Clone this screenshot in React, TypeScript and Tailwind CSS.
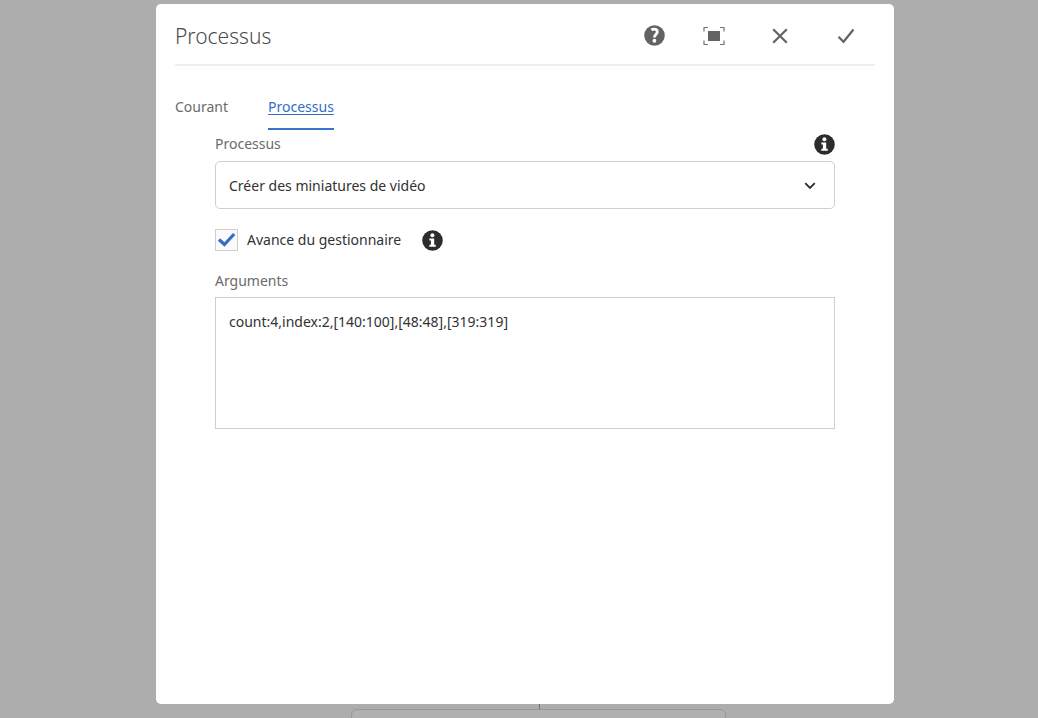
import { useState } from "react";

function InfoIcon() {
  return (
    <svg viewBox="0 0 20 20" className="size-[21px]" aria-hidden="true">
      <circle cx="10" cy="10" r="9.8" fill="#2c2c2c" />
      <circle cx="9.9" cy="5" r="1.9" fill="#fff" />
      <path d="M7 8h4.6v6h1.5v2H7v-2h1.5v-4H7z" fill="#fff" />
    </svg>
  );
}

function HelpIcon() {
  return (
    <svg viewBox="0 0 20 20" className="size-[21px]" aria-hidden="true">
      <circle cx="10" cy="10" r="9.8" fill="#636363" />
      <path d="M7 4.6c2.8-1.4 5.7-.6 5.7 1.8 0 2.3-2.8 2.5-2.8 5.4" fill="none" stroke="#fff" strokeWidth="2.7" />
      <circle cx="9.9" cy="15" r="1.8" fill="#fff" />
    </svg>
  );
}

function FullscreenIcon() {
  return (
    <svg viewBox="0 0 22 18" className="h-[18px] w-[22px]" aria-hidden="true">
      <rect x="5" y="4" width="12" height="10" fill="#636363" />
      <path d="M1 4.5V.5h4M17 .5h4v4M21 13.500v4h-4M5 17.500H1v-4" fill="none" stroke="#737373" strokeWidth="1.2" />
    </svg>
  );
}

const iconButton = "flex size-8 cursor-pointer items-center justify-center";

export default function App() {
  const [advance, setAdvance] = useState(true);
  const [args, setArgs] = useState("count:4,index:2,[140:100],[48:48],[319:319]");

  return (
    <div className="relative flex h-screen flex-col items-center overflow-hidden bg-[#adadad] pt-1 pr-0 pb-[14px] pl-3 font-['Noto_Sans',sans-serif] text-sm text-[#323232]">
      <div className="absolute bottom-[9px] left-[539px] h-[5px] w-px bg-[#707070]" />
      <div className="absolute -bottom-10 left-[351px] h-[49px] w-[375px] rounded-md border border-[#999] bg-[#b0b0b0]" />

      <section role="dialog" aria-label="Processus" className="relative flex w-full max-w-[738px] flex-1 flex-col rounded-[5px] bg-white px-[19px]">
        <header className="flex h-[62px] items-center justify-between border-b-2 border-[#eee] pt-[3px]">
          <h1 className="text-[21px] leading-8 font-light text-[#4b4b4b]">Processus</h1>
          <div className="flex items-center gap-[34px] pr-[13px]">
            <div className="flex items-center gap-7">
              <button type="button" aria-label="Aide" className={iconButton}><HelpIcon /></button>
              <button type="button" aria-label="Plein écran" className={iconButton}><FullscreenIcon /></button>
            </div>
            <button type="button" aria-label="Fermer" className={iconButton}>
              <svg viewBox="0 0 16 16" className="size-4" fill="none" stroke="#636363" strokeWidth="2.2" aria-hidden="true">
                <path d="M1.200 1.200l13.600 13.600M14.800 1.200L1.200 14.800" />
              </svg>
            </button>
            <button type="button" aria-label="Terminé" className={iconButton}>
              <svg viewBox="0 0 18 16" className="h-4 w-[18px]" fill="none" stroke="#636363" strokeWidth="2.2" aria-hidden="true">
                <path d="M1.500 8.800l5 5L16.500 1.500" />
              </svg>
            </button>
          </div>
        </header>

        <nav className="mt-[29px] flex gap-10">
          <a href="#courant" className="pb-[9px] leading-6 text-[#6b6b6b]">Courant</a>
          <a href="#processus" className="border-b-2 border-[#3b72ce] pb-[9px] leading-6 text-[#326ec8] underline underline-offset-2">Processus</a>
        </nav>

        <form className="px-10">
          <div className="flex h-[31px] items-center justify-between pb-[3px]">
            <label htmlFor="process" className="leading-5 text-[#6b6b6b]">Processus</label>
            <button type="button" aria-label="Informations sur le processus"><InfoIcon /></button>
          </div>
          <div className="relative">
            <select id="process" className="h-12 w-full appearance-none rounded-[5px] border border-[#cfcfcf] bg-white px-[13px] pt-px">
              <option>Créer des miniatures de vidéo</option>
            </select>
            <svg viewBox="0 0 12 8" className="pointer-events-none absolute top-[21px] right-[19px] h-2 w-3" fill="none" stroke="#2c2c2c" strokeWidth="1.8" aria-hidden="true">
              <path d="M1.200 1.200L6 6l4.800-4.800" />
            </svg>
          </div>

          <div className="mt-5 flex h-[22px] items-center">
            <label className="flex items-center gap-[9px]">
              <span className="relative flex">
                <input
                  type="checkbox"
                  checked={advance}
                  onChange={(e) => setAdvance(e.target.checked)}
                  className="h-[22px] w-[23px] appearance-none border border-[#cfcfcf] bg-[#fafafa]"
                />
                {advance && (
                  <svg viewBox="0 0 23 22" className="pointer-events-none absolute inset-0" fill="none" stroke="#326ec8" strokeWidth="3.2" aria-hidden="true">
                    <path d="M4 10.500l5.400 5L19.200 5" />
                  </svg>
                )}
              </span>
              Avance du gestionnaire
            </label>
            <button type="button" aria-label="Informations sur l'avance" className="ml-[21px]"><InfoIcon /></button>
          </div>

          <label htmlFor="arguments" className="mt-5 mb-[6px] block leading-5 text-[#6b6b6b]">Arguments</label>
          <textarea
            id="arguments"
            value={args}
            onChange={(e) => setArgs(e.target.value)}
            className="block h-[132px] w-full resize-none border border-[#cfcfcf] px-[13px] py-3 leading-6"
          />
        </form>
      </section>
    </div>
  );
}
